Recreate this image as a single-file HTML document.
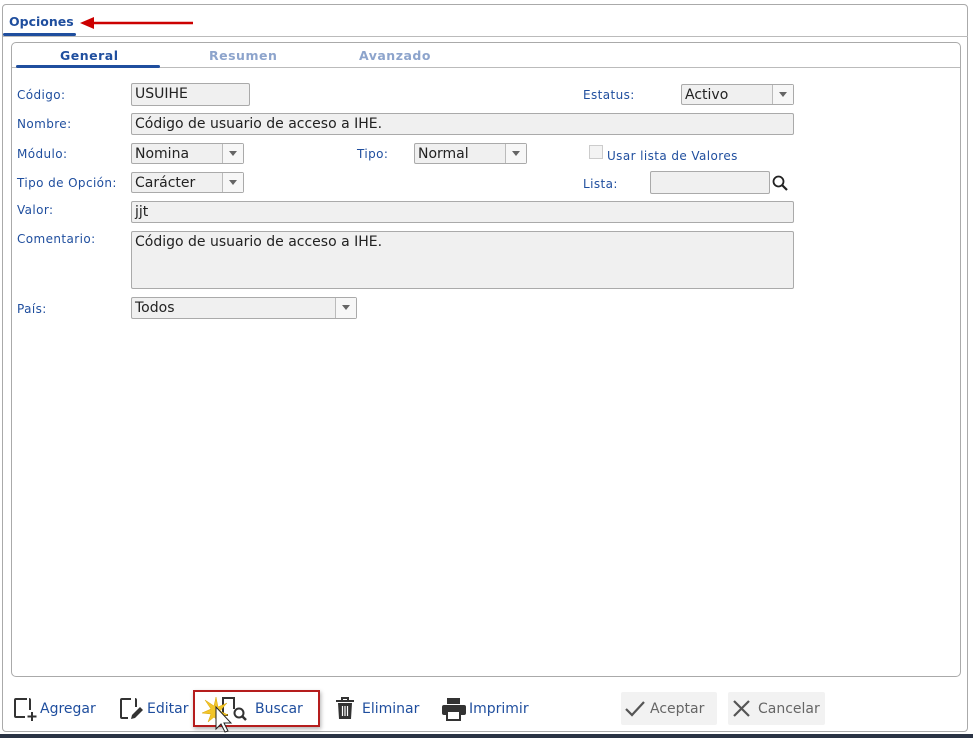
<!DOCTYPE html>
<html><head><meta charset="utf-8"><style>
body{margin:0;width:973px;height:738px;background:#fff;position:relative;overflow:hidden;font-family:"DejaVu Sans","Liberation Sans",sans-serif;}
.a{position:absolute}
.lbl{position:absolute;font-size:12px;color:#1f4e9e;letter-spacing:0.4px}
.inp{position:absolute;background:#f0f0f0;border:1px solid #aaa;border-radius:2px;box-sizing:border-box;font-size:14px;color:#222;padding-left:3px;padding-top:1px;line-height:19px}
.sel .arr{position:absolute;right:0;top:0;bottom:0;width:20px;border-left:1px solid #bbb;background:#f7f7f7}
.sel .arr:after{content:"";position:absolute;left:6px;top:7px;border-left:4px solid transparent;border-right:4px solid transparent;border-top:5px solid #666}
.btn{position:absolute;font-size:14px;color:#1f4e9e;font-family:"DejaVu Sans",sans-serif}
</style></head><body>
<div class="a" style="left:2px;top:4px;width:966px;height:728px;border:1px solid #aaa;border-radius:4px;box-sizing:border-box"></div>
<div class="a" style="left:0;top:734px;width:973px;height:4px;background:#2a3344"></div>
<div class="a" style="left:9px;top:14px;font-size:12.5px;font-weight:bold;color:#1f4e9e">Opciones</div>
<div class="a" style="left:3px;top:33px;width:73px;height:3px;background:#1f4e9e;border-radius:2px"></div>
<div class="a" style="left:3px;top:36px;width:965px;height:1px;background:#bbb"></div>
<svg class="a" style="left:78px;top:14px" width="120" height="20"><line x1="115" y1="9" x2="14" y2="9" stroke="#c00" stroke-width="2.5"/><polygon points="2,9 16,3 16,15" fill="#c00"/></svg>
<div class="a" style="left:11px;top:42px;width:950px;height:635px;border:1px solid #aaa;border-radius:5px;box-sizing:border-box"></div>
<div class="a" style="left:12px;top:67px;width:948px;height:1px;background:#bbb"></div>
<div class="a" style="left:60px;top:48px;font-size:12.5px;font-weight:bold;color:#1f4e9e;letter-spacing:.5px">General</div>
<div class="a" style="left:209px;top:48px;font-size:12.5px;font-weight:bold;color:#8da4cc;letter-spacing:.5px">Resumen</div>
<div class="a" style="left:359px;top:48px;font-size:12.5px;font-weight:bold;color:#8da4cc;letter-spacing:.5px">Avanzado</div>
<div class="a" style="left:16px;top:65px;width:144px;height:3px;background:#1f4e9e;border-radius:2px"></div>

<div class="lbl" style="left:17px;top:88px">Código:</div>
<div class="inp" style="left:131px;top:83px;width:119px;height:23px">USUIHE</div>
<div class="lbl" style="left:583px;top:88px">Estatus:</div>
<div class="inp sel" style="left:681px;top:84px;width:113px;height:21px">Activo<span class="arr"></span></div>

<div class="lbl" style="left:17px;top:117px">Nombre:</div>
<div class="inp" style="left:131px;top:113px;width:663px;height:22px">Código de usuario de acceso a IHE.</div>

<div class="lbl" style="left:17px;top:147px">Módulo:</div>
<div class="inp sel" style="left:131px;top:143px;width:113px;height:21px">Nomina<span class="arr"></span></div>
<div class="lbl" style="left:357px;top:147px">Tipo:</div>
<div class="inp sel" style="left:414px;top:143px;width:113px;height:21px">Normal<span class="arr"></span></div>
<div class="a" style="left:589px;top:145px;width:14px;height:14px;border:1px solid #ccc;background:#f3f3f3;box-sizing:border-box"></div>
<div class="lbl" style="left:607px;top:149px">Usar lista de Valores</div>

<div class="lbl" style="left:17px;top:176px">Tipo de Opción:</div>
<div class="inp sel" style="left:131px;top:172px;width:113px;height:21px">Carácter<span class="arr"></span></div>
<div class="lbl" style="left:583px;top:177px">Lista:</div>
<div class="inp" style="left:650px;top:171px;width:120px;height:23px"></div>
<svg class="a" style="left:772px;top:175px" width="18" height="18"><circle cx="6.5" cy="6.5" r="5" fill="none" stroke="#222" stroke-width="1.8"/><line x1="10" y1="10" x2="15" y2="15" stroke="#222" stroke-width="2.2"/></svg>

<div class="lbl" style="left:17px;top:203px">Valor:</div>
<div class="inp" style="left:131px;top:201px;width:663px;height:22px">jjt</div>
<div class="lbl" style="left:17px;top:232px">Comentario:</div>
<div class="inp" style="left:131px;top:231px;width:663px;height:58px">Código de usuario de acceso a IHE.</div>
<div class="lbl" style="left:17px;top:302px">País:</div>
<div class="inp sel" style="left:131px;top:297px;width:226px;height:22px">Todos<span class="arr"></span></div>

<svg class="a" style="left:13px;top:697px" width="24" height="26"><path d="M14 2H3a1 1 0 0 0-1 1v16a1 1 0 0 0 1 1h9M17 13V3a1 1 0 0 0-1-1" fill="none" stroke="#333" stroke-width="2"/><path d="M19 15v9M14.5 19.5h9" stroke="#333" stroke-width="2"/></svg>
<div class="btn" style="left:40px;top:701px">Agregar</div>
<svg class="a" style="left:119px;top:697px" width="26" height="26"><path d="M12 2H3a1 1 0 0 0-1 1v17a1 1 0 0 0 1 1h6M17 10V3a1 1 0 0 0-1-1" fill="none" stroke="#333" stroke-width="2"/><path d="M12 22l1-4 8-8 3 3-8 8z" fill="#333"/></svg>
<div class="btn" style="left:147px;top:701px">Editar</div>
<div class="a" style="left:193px;top:690px;width:127px;height:37px;border:2px solid #b51d1d;box-sizing:border-box;box-shadow:1px 2px 4px rgba(0,0,0,.3)"></div>
<svg class="a" style="left:200px;top:693px" width="52" height="42"><path d="M34 16V5H23v17h5" fill="none" stroke="#333" stroke-width="2"/><circle cx="39" cy="20" r="4.5" fill="none" stroke="#333" stroke-width="2"/><line x1="42" y1="23" x2="46" y2="27" stroke="#333" stroke-width="2.5"/><path d="M16 4l2 10 9-4-7 8 8 4-10 1 3 8-7-7-6 5 3-8-9-1 9-4-6-9 9 6z" fill="#f2c52a" stroke="#d9a400" stroke-width=".5"/><path d="M16 14v22l5-5 4 8 3-1-4-8h7z" fill="#fff" stroke="#222" stroke-width="1"/></svg>
<div class="btn" style="left:255px;top:701px">Buscar</div>
<svg class="a" style="left:334px;top:696px" width="22" height="26"><path d="M2 5h18M8 5V2h6v3" fill="none" stroke="#333" stroke-width="2"/><path d="M4 7h14l-1 16H5z" fill="#333"/><path d="M8.5 10v10M11 10v10M13.5 10v10" stroke="#fff" stroke-width="1.2"/></svg>
<div class="btn" style="left:362px;top:701px">Eliminar</div>
<svg class="a" style="left:441px;top:697px" width="26" height="24"><rect x="6" y="1" width="13" height="6" fill="#333"/><rect x="1" y="8" width="24" height="10" rx="2" fill="#333"/><rect x="6" y="14" width="13" height="9" fill="#fff" stroke="#333" stroke-width="2"/></svg>
<div class="btn" style="left:469px;top:701px">Imprimir</div>

<div class="a" style="left:621px;top:692px;width:96px;height:33px;background:#f2f2f2;border-radius:2px"></div>
<svg class="a" style="left:624px;top:700px" width="22" height="18"><path d="M2 9l6 6L20 2" fill="none" stroke="#555" stroke-width="2.2"/></svg>
<div class="a" style="left:650px;top:701px;font-size:14px;color:#666">Aceptar</div>
<div class="a" style="left:728px;top:692px;width:97px;height:33px;background:#f2f2f2;border-radius:2px"></div>
<svg class="a" style="left:732px;top:699px" width="20" height="20"><path d="M2 2l15 15M17 2L2 17" stroke="#555" stroke-width="2.2"/></svg>
<div class="a" style="left:758px;top:701px;font-size:14px;color:#666">Cancelar</div>
</body></html>
